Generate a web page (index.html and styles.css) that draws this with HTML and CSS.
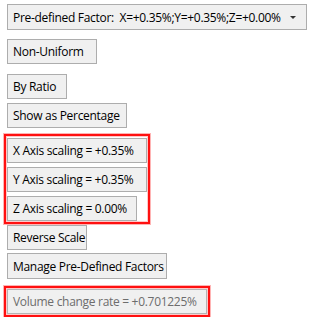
FILE: index.html
```html
<!DOCTYPE html>
<html lang="en">
<head>
    <meta charset="UTF-8">
    <title>Scale Options</title>
    <link rel="stylesheet" href="styles.css">
</head>
<body>
    <div class="panel">
        <div class="combo">
            <span class="combo-text">Pre-defined Factor:  X=+0.35%;Y=+0.35%;Z=+0.00%</span>
            <span class="combo-arrow"></span>
        </div>

        <button class="btn w-90 after-combo">Non-Uniform</button>
        <button class="btn w-60 gap-lg">By Ratio</button>
        <button class="btn w-120 gap-sm">Show as Percentage</button>

        <div class="highlight axis-group">
            <button class="btn w-140">X Axis scaling = +0.35%</button>
            <button class="btn w-140">Y Axis scaling = +0.35%</button>
            <button class="btn w-130">Z Axis scaling = 0.00%</button>
        </div>

        <button class="btn w-80 gap-xs">Reverse Scale</button>
        <button class="btn w-160 gap-md tall">Manage Pre-Defined Factors</button>

        <div class="highlight volume-group">
            <button class="btn w-200 disabled" disabled>Volume change rate = +0.701225%</button>
        </div>
    </div>
</body>
</html>
```

FILE: styles.css
```css
body {
    margin: 0;
    background-color: #ffffff;
    font-family: "Open Sans", "Noto Sans", sans-serif;
    font-size: 12px;
    letter-spacing: -0.3px;
    color: #000000;
}
.panel {
    display: flex;
    flex-direction: column;
    align-items: flex-start;
    padding: 4px 0 0 4px;
}
.combo {
    display: flex;
    align-items: center;
    justify-content: space-between;
    width: 300px;
    height: 26px;
    margin-left: 3px;
    padding: 0 10px 0 5px;
    box-sizing: border-box;
    background-color: #f0f0f0;
    border: 1px solid #adadad;
}
.combo-text {
    white-space: pre;
}
.combo-arrow {
    width: 0;
    height: 0;
    border-left: 3px solid transparent;
    border-right: 3px solid transparent;
    border-top: 3px solid #333333;
}
.btn {
    height: 25px;
    margin-left: 3px;
    padding: 0 0 0 5px;
    box-sizing: border-box;
    font-family: inherit;
    font-size: inherit;
    letter-spacing: inherit;
    color: #000000;
    text-align: left;
    white-space: nowrap;
    background-color: #f0f0f0;
    border: 1px solid #adadad;
    border-radius: 0;
}
.w-60 { width: 60px; }
.w-80 { width: 80px; }
.w-90 { width: 90px; }
.w-120 { width: 120px; }
.w-130 { width: 130px; }
.w-140 { width: 140px; }
.w-160 { width: 160px; }
.w-200 { width: 200px; }
.after-combo {
    margin-top: 9px;
}
.gap-lg {
    margin-top: 10px;
}
.gap-md {
    margin-top: 3px;
}
.gap-sm {
    margin-top: 4px;
}
.gap-xs {
    margin-top: 1px;
}
.tall {
    height: 26px;
}
.highlight {
    display: flex;
    flex-direction: column;
    align-items: flex-start;
    border: 2px solid #ff1010;
    box-shadow: 0 0 0 1px #ffb4b4, inset 0 0 0 1px #ffc8c8;
}
.highlight .btn {
    margin-left: 1px;
}
.axis-group {
    gap: 4px;
    margin-top: 6px;
    padding: 2px 1px 1px 0;
}
.volume-group {
    margin-top: 7px;
    padding: 1px 1px 1px 0;
}
.btn.disabled {
    color: #6d6d6d;
    border-color: #b4b4b4;
}
```
